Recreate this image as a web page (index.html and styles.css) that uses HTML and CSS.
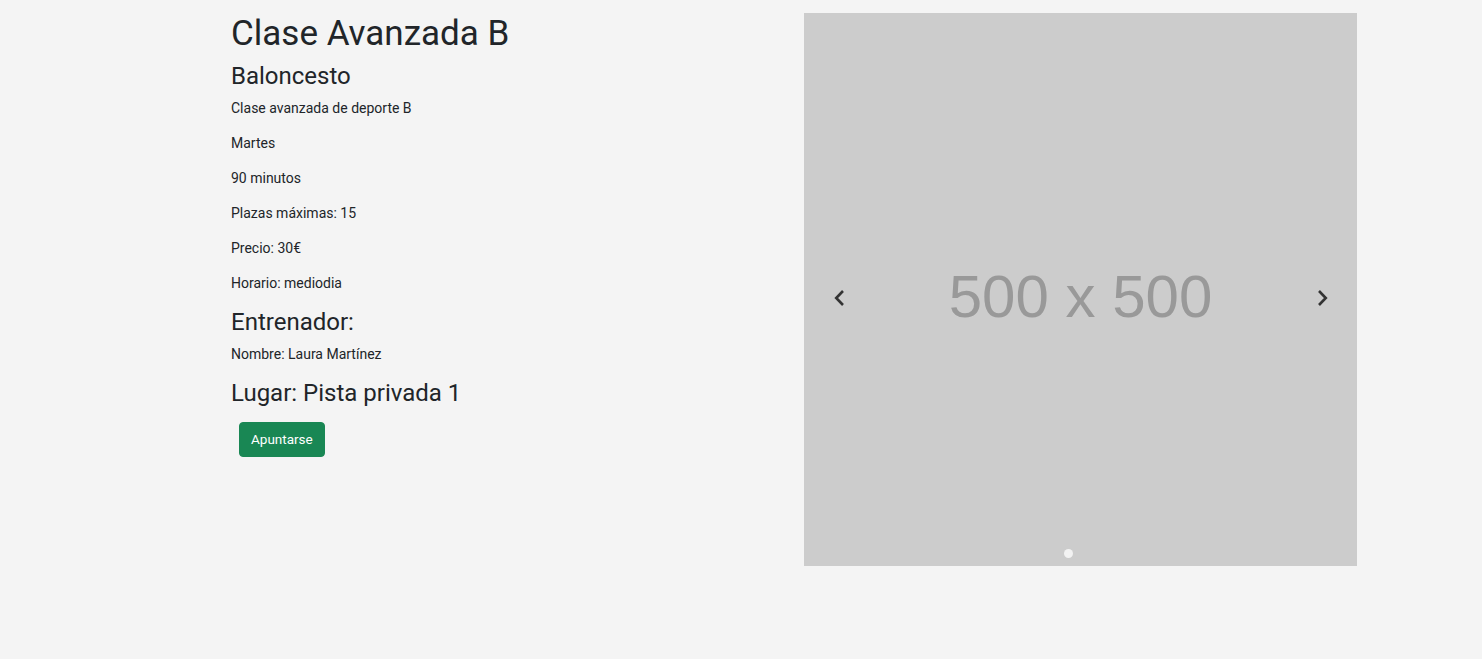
FILE: index.html
```html
<!DOCTYPE html>
<html lang="es">
<head>
    <meta charset="UTF-8">
    <meta name="viewport" content="width=device-width, initial-scale=1.0">
    <title>Clase Avanzada B</title>
    <link rel="stylesheet" href="styles.css">
</head>
<body>
    <div class="container">
        <div class="info">
            <h1>Clase Avanzada B</h1>
            <h3>Baloncesto</h3>
            <p>Clase avanzada de deporte B</p>
            <p>Martes</p>
            <p>90 minutos</p>
            <p>Plazas máximas: 15</p>
            <p>Precio: 30€</p>
            <p>Horario: mediodia</p>
            <h3>Entrenador:</h3>
            <p>Nombre: Laura Martínez</p>
            <h3>Lugar: Pista privada 1</h3>
            <div class="actions">
                <button class="btn-join">Apuntarse</button>
            </div>
        </div>
        <div class="carousel">
            <div class="slide">500 x 500</div>
            <button class="nav prev" aria-label="Anterior">
                <svg width="18" height="18" viewBox="0 0 18 18"><path d="M12 2 5.2 9 12 16" fill="none" stroke="#333" stroke-width="2.6"/></svg>
            </button>
            <button class="nav next" aria-label="Siguiente">
                <svg width="18" height="18" viewBox="0 0 18 18"><path d="M6 2l6.8 7L6 16" fill="none" stroke="#333" stroke-width="2.6"/></svg>
            </button>
            <div class="dots"><span class="dot"></span></div>
        </div>
    </div>
</body>
</html>
```

FILE: styles.css
```css
html {
    font-size: 14px;
}
body {
    margin: 0;
    font-family: Roboto, "Liberation Sans", sans-serif;
    font-size: 14px;
    line-height: 1.5;
    background-color: #f4f4f4;
    color: #212529;
}
.container {
    display: grid;
    grid-template-columns: 553px 553px;
    column-gap: 20px;
    padding: 13px 0 0 231px;
}
h1, h3 {
    font-weight: 400;
    line-height: 1.2;
    margin: 0 0 7px;
}
h1 {
    font-size: 35px;
}
h3 {
    font-size: 24px;
}
p {
    margin: 0 0 14px;
}
.actions {
    padding: 8px 8px;
}
.btn-join {
    font-family: inherit;
    font-size: 13.5px;
    line-height: 1.5;
    padding: 6px 11px;
    color: #fff;
    background-color: #198754;
    border: 1px solid #198754;
    border-radius: 4px;
    cursor: pointer;
}
.carousel {
    position: relative;
    width: 553px;
    height: 553px;
}
.slide {
    box-sizing: border-box;
    width: 100%;
    height: 100%;
    padding-top: 14px;
    background-color: #cccccc;
    color: #999999;
    font-family: "Liberation Sans", Arial, sans-serif;
    font-size: 60px;
    display: flex;
    align-items: center;
    justify-content: center;
}
.nav {
    position: absolute;
    top: 270px;
    width: 30px;
    height: 30px;
    padding: 0;
    border: none;
    background: none;
    display: flex;
    align-items: center;
    justify-content: center;
    cursor: pointer;
}
.prev {
    left: 21px;
}
.next {
    right: 20px;
}
.dots {
    position: absolute;
    left: 0;
    right: 24px;
    bottom: 8px;
    display: flex;
    justify-content: center;
}
.dot {
    width: 9px;
    height: 9px;
    border-radius: 50%;
    background-color: #f2f2f2;
}
```
